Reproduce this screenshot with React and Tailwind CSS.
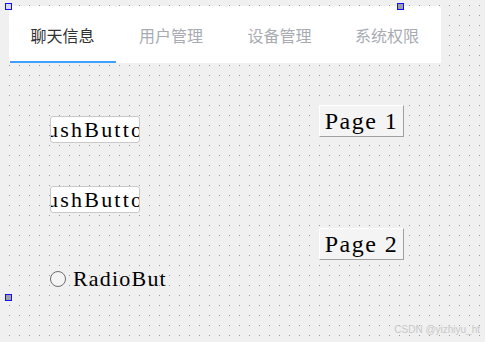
import React from 'react'

const tabs = [
  { label: '聊天信息', width: 'w-[107px]', active: true },
  { label: '用户管理', width: 'w-[110px]' },
  { label: '设备管理', width: 'w-[107px]' },
  { label: '系统权限', width: 'w-[108px]' },
]

function Handle({ className }) {
  return (
    <div
      className={`absolute w-[7px] h-[7px] border border-[#1010ff] ${className}`}
    />
  )
}

function PushButton() {
  return (
    <div className="w-[90px] h-[27px] bg-white border border-[#c9c9c9] rounded-[3px] overflow-hidden flex items-center justify-center font-['Liberation_Serif',serif] text-[22px] text-black whitespace-nowrap">
      <span className="tracking-[2.2px] shrink-0">PushButton</span>
    </div>
  )
}

function PageButton({ children }) {
  return (
    <div className="w-[85px] h-[32px] bg-[#f4f4f4] border border-t-white border-l-white border-r-[#a0a0a0] border-b-[#a0a0a0] flex items-center justify-center font-['Liberation_Serif',serif] text-[24px] tracking-[1.5px] text-black whitespace-pre">
      {children}
    </div>
  )
}

export default function App() {
  return (
    <div className="relative w-[485px] h-[342px] overflow-hidden bg-[#f0f0f0] bg-[radial-gradient(circle_at_0.5px_0.5px,#999999_0.7px,transparent_0.7px)] bg-size-[10px_10px] bg-position-[9px_5px] pt-[6px] pl-[9px]">
      {/* tab bar */}
      <div className="flex h-[57px]">
        {tabs.map((t) => (
          <div
            key={t.label}
            className={`relative ${t.width} h-full bg-white rounded-t-[3px] flex items-center justify-center font-['Noto_Sans_CJK_SC',sans-serif] text-[16px] ${
              t.active ? 'text-[#303133]' : 'text-[#a8abb2]'
            }`}
          >
            <span className="mt-[1px]">{t.label}</span>
            {t.active && (
              <div className="absolute left-[1px] right-0 bottom-0 h-[2px] bg-[#409eff]" />
            )}
          </div>
        ))}
      </div>

      {/* form widgets */}
      <div className="flex">
        <div className="ml-[41px] mt-[53px] w-[90px] flex flex-col">
          <PushButton />
          <div className="mt-[43px]">
            <PushButton />
          </div>
          <div className="mt-[49px] flex items-center gap-[7px] whitespace-nowrap font-['Liberation_Serif',serif] text-[22px] tracking-[1.2px] text-black">
            <span className="shrink-0 w-[16px] h-[16px] rounded-full border border-[#6e6e6e] bg-[#f4f4f4]" />
            <span>RadioBut</span>
          </div>
        </div>
        <div className="ml-[179px] mt-[42px] flex flex-col gap-[91px]">
          <PageButton>Page 1</PageButton>
          <PageButton>Page 2</PageButton>
        </div>
      </div>

      {/* selection handles */}
      <Handle className="left-[5px] top-[3px] bg-[#d8d8f0]" />
      <Handle className="left-[397px] top-[3px] bg-[#a0a0a0]" />
      <Handle className="left-[5px] top-[294px] bg-[#a0a0a0]" />

      <div className="absolute right-[5px] bottom-[5px] font-['Liberation_Sans',sans-serif] text-[10px] text-[#c8c8c8]">
        CSDN @yizhiyu_ht
      </div>
    </div>
  )
}
